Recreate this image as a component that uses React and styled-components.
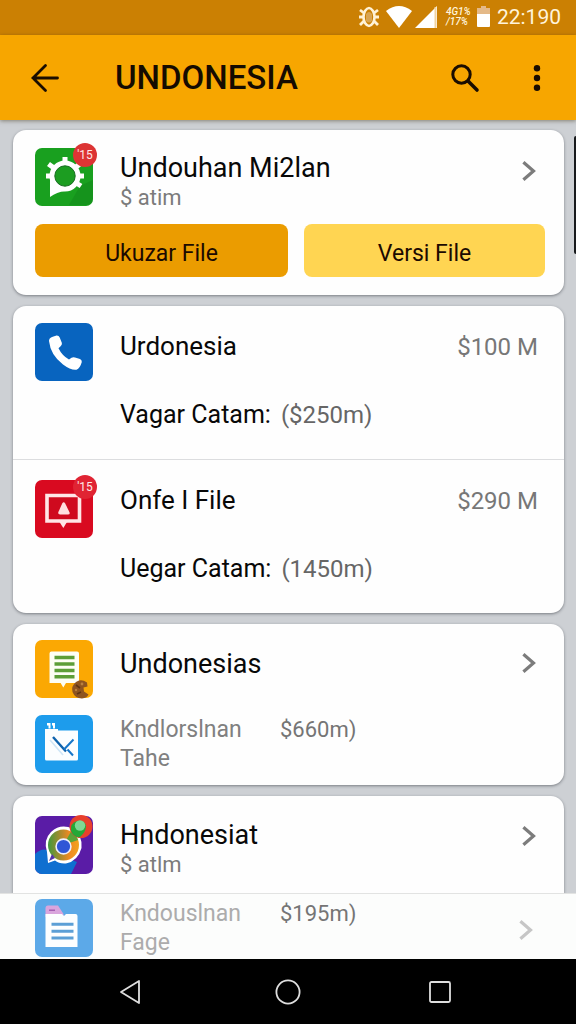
import React from "react";
import styled, { createGlobalStyle } from "styled-components";

const GlobalStyle = createGlobalStyle`
  *, *::before, *::after { box-sizing: border-box; }
  body {
    margin: 0;
    background: #cdd0d4;
    font-family: Roboto, "Liberation Sans", sans-serif;
    color: #080808;
  }
  h1, h2, h3, p { margin: 0; font-weight: 400; }
  button { font: inherit; color: inherit; border: 0; padding: 0; background: none; cursor: pointer; }
  svg { display: block; overflow: visible; }
`;

const Page = styled.div`
  position: relative;
  display: flex;
  flex-direction: column;
  min-height: 100vh;
`;

const StatusBar = styled.div`
  display: flex;
  align-items: center;
  justify-content: flex-end;
  gap: 7px;
  height: 35px;
  padding: 0 15px 2px 0;
  background: #cb8003;
  color: #fff4dc;
`;

const SignalGroup = styled.div`
  display: flex;
  gap: 3px;
`;

const NetStats = styled.div`
  width: 24px;
  margin-left: 2px;
  font-size: 10px;
  line-height: 10px;
  font-style: italic;
  font-weight: 500;
`;

const Clock = styled.time`
  font-size: 21px;
  line-height: 28px;
`;

const AppBar = styled.header`
  position: relative;
  display: flex;
  align-items: center;
  gap: 24px;
  height: 85px;
  padding: 0 15px 0 21px;
  background: #f7a600;
  box-shadow: 0 1px 4px rgba(60, 50, 20, 0.5);
`;

const IconButton = styled.button`
  display: grid;
  place-items: center;
  flex: none;
  width: 48px;
  height: 48px;
`;

const Title = styled.h1`
  flex: 1;
  padding-left: 22px;
  font-size: 33px;
  line-height: 40px;
  font-weight: 500;
  color: #150b00;
`;

const Main = styled.main`
  flex: 1;
  display: flex;
  flex-direction: column;
  gap: 11px;
  padding: 10px 12px 0 13px;
`;

const Card = styled.section`
  background: #fefefe;
  border-radius: ${(p) => (p.$cut ? "13px 13px 0 0" : "13px")};
  box-shadow: 0 1px 3px rgba(40, 44, 52, 0.5);
`;

const Row = styled.div`
  display: flex;
  align-items: flex-start;
  gap: 27px;
  padding: ${(p) => p.$top}px 18px ${(p) => p.$bottom || 0}px 22px;
`;

const Divided = styled.div`
  & + & { border-top: 1px solid #dcdddf; }
`;

const Tile = styled.div`
  position: relative;
  flex: none;
  width: 58px;
  height: 58px;
`;

const Badge = styled.span`
  position: absolute;
  top: -5px;
  right: -4px;
  width: 24px;
  height: 24px;
  border-radius: 50%;
  background: ${(p) => p.$color};
  color: #ffe9e9;
  font-size: 12px;
  line-height: 24px;
  text-align: center;
`;

const Body = styled.div`
  flex: 1;
  min-width: 0;
  padding-top: ${(p) => p.$inset || 0}px;
`;

const Heading = styled.h2`
  font-size: ${(p) => (p.$large ? 27 : 26)}px;
  line-height: 32px;
`;

const Subtitle = styled.p`
  font-size: 22px;
  line-height: 28px;
  color: #7b7b7b;
`;

const Line = styled.div`
  display: flex;
  justify-content: space-between;
  align-items: baseline;
`;

const Price = styled.span`
  padding-right: 8px;
  font-size: 24px;
  line-height: 32px;
  color: #777;
`;

const Detail = styled.p`
  display: flex;
  gap: 10px;
  padding: 38px 0 30px;
  font-size: 25px;
  line-height: 28px;
`;

const DetailAmount = styled.span`
  font-size: 24px;
  color: #666;
`;

const Entry = styled.div`
  flex: 1;
  display: grid;
  grid-template-columns: 160px 1fr;
`;

const EntryName = styled.p`
  max-width: 130px;
  font-size: 23px;
  line-height: 29px;
  color: ${(p) => (p.$faded ? "#acacac" : "#808080")};
`;

const EntryAmount = styled.p`
  font-size: 22px;
  line-height: 29px;
  color: #757575;
`;

const Actions = styled.div`
  display: grid;
  grid-template-columns: 21fr 20fr;
  gap: 16px;
  padding: 12px 19px 18px 22px;
`;

const Action = styled.button`
  height: 53px;
  border-radius: 8px;
  background: ${(p) => (p.$primary ? "#eb9c00" : "#ffd552")};
  color: #1c0a00;
  font-size: 23px;
  line-height: 28px;
  padding-top: 6px;
`;

const ChevronButton = styled.button`
  display: grid;
  place-items: center;
  flex: none;
  width: 34px;
  height: 32px;
  margin-top: ${(p) => p.$drop}px;
  color: ${(p) => (p.$faded ? "#c6c6c6" : "#7c7c7c")};
`;

const Sheet = styled.section`
  position: relative;
  border-top: 1px solid #e2e3e2;
  background: #fcfdfc;
  height: 66px;
  padding: 0 15px 0 13px;
`;

const NavBar = styled.nav`
  position: relative;
  display: grid;
  grid-template-columns: 32fr 31fr 30fr;
  place-items: center;
  height: 65px;
  padding: 0 61px 0 50px;
  background: #000;
  color: #dedede;
`;

const ScrollThumb = styled.div`
  position: absolute;
  top: 136px;
  right: 0;
  width: 2px;
  height: 118px;
  border-radius: 2px 0 0 2px;
  background: #17191c;
`;

const Chevron = () => (
  <svg width="14" height="20" viewBox="0 0 14 20" fill="none" stroke="currentColor" strokeWidth="3.2">
    <path d="M1.4 1.2 11.5 10 1.4 18.8" />
  </svg>
);

const Frame = ({ fill, children }) => (
  <svg width="58" height="58" viewBox="0 0 58 58" aria-hidden="true">
    <rect width="58" height="58" rx="7" fill={fill} />
    {children}
  </svg>
);

const GearIcon = () => (
  <Frame fill="#19a01f">
    <path d="M45 38 34 57H51Q58 57 58 50V32L45 38Z" fill="#118319" opacity=".45" />
    <path d="M15 49 15 31H30V43Q22 44 15 49Z" fill="#fff" />
    <g stroke="#fff" strokeWidth="5">
      <path d="M30 28V9M30 28 13.5 16M30 28H11M30 28H49M30 28 46 15M30 28 46 38" />
    </g>
    <circle cx="30" cy="28" r="15.5" fill="#fff" />
    <circle cx="30" cy="28" r="10.2" fill="#1c9d21" stroke="#176d20" strokeWidth="1" />
  </Frame>
);

const PhoneIcon = () => (
  <Frame fill="#0864bf">
    <path
      fill="#fff"
      d="M14 18Q14 15 17 14L21.5 12.5Q23.8 12.3 24.7 14.5L26.9 20Q27.2 22 25.6 23.2L23.5 25.2Q27 32.5 34 36.5L36.5 34.8Q38 34 40 34.5L45 36Q47 37 46.8 39Q45 45.5 41.5 46.7Q36 47.5 28 41.5Q15.5 32 14 18Z"
    />
  </Frame>
);

const AlertIcon = () => (
  <Frame fill="#d90a20">
    <path d="M12 15.5H44.5V41H12Z" fill="#cf0a1e" stroke="#ffe6e6" strokeWidth="3.6" />
    <path d="M24.5 42H32L28.3 48Z" fill="#ffe6e6" />
    <path d="M27.2 23.4Q28.8 21 30.2 23.6L34.6 32.4Q35.2 34.4 33 34.4H25Q22.6 34.2 23.4 32Z" fill="#ffdfdf" />
  </Frame>
);

const NotesIcon = () => (
  <Frame fill="#fba803">
    <path d="M16.5 11.5H42Q44 11.5 44 13.5V43H31L28.3 47.5 25.6 43H14.5V13.5Q14.5 11.5 16.5 11.5Z" fill="#fdfef4" />
    <path d="M19.5 17.6H39.5M19.5 24H39.5M19.5 30.5H39.5M19.5 36.8H39.5" stroke="#5d9e37" strokeWidth="3.5" />
    <path d="M52 42.5Q46 38.5 41 42Q36 46 37.5 52Q40 58.5 47 58.5Q52 58 53.5 54.5L49 51.5 48.5 47.5 52.5 46.5Z" fill="#8e5420" />
    <path d="M41 45 45 48M42 54 46 52" stroke="#5f3512" strokeWidth="1.6" />
    <circle cx="47" cy="44" r="1.4" fill="#b9803f" />
    <circle cx="41" cy="50" r="1.2" fill="#b9803f" />
  </Frame>
);

const MemoIcon = () => (
  <Frame fill="#1d9cec">
    <path d="M10 14H23V15.5H43V44Q43 45.5 41.5 45.5H11.5Q10 45.5 10 44Z" fill="#fcfeff" />
    <path d="M12 8H15.5V13.5H13.5V10.5H12ZM17 8H20V13.5H18V10.5H17Z" fill="#fff" />
    <path d="M18 22 31 36.5" stroke="#0d62ad" strokeWidth="2.4" />
    <path d="M29 34.5 38.5 24.5M32.5 34.5 38 40.5" stroke="#1877c9" strokeWidth="2" />
    <path d="M15 25 28 40" stroke="#cfe6f7" strokeWidth="1.6" />
  </Frame>
);

const ChatIcon = () => (
  <svg width="58" height="58" viewBox="0 0 58 58" aria-hidden="true">
    <defs>
      <linearGradient id="chatRing" x1="0" y1="0" x2="1" y2="0">
        <stop offset="0" stopColor="#3f9a3f" />
        <stop offset=".4" stopColor="#a98a2e" />
        <stop offset=".7" stopColor="#ef8a22" />
        <stop offset="1" stopColor="#f2a41f" />
      </linearGradient>
      <clipPath id="chatTile">
        <rect width="58" height="58" rx="7" />
      </clipPath>
    </defs>
    <g clipPath="url(#chatTile)">
      <rect width="58" height="58" fill="#5a1ca6" />
      <path d="M0 38Q8 30 16 36L42 46 36 58H0Z" fill="#0f6fd0" />
    </g>
    <path d="M13 47 12 36Q8 24 16 16Q26 7 38 13Q48 20 46.5 32Q43 45 31 47.5Q24 48 20 44.5Z" fill="#fff" />
    <circle cx="28.5" cy="29" r="15.5" fill="url(#chatRing)" />
    <path d="M28.5 29 36 15.4A15.5 15.5 0 0 1 43 24Z" fill="#5aa338" />
    <path d="M14 45 17 38 20 42Z" fill="#5534a8" />
    <circle cx="28.5" cy="30.5" r="7.4" fill="#2f56d6" stroke="#eef0ff" strokeWidth="1.6" />
    <circle cx="46" cy="10.5" r="11.5" fill="#e8402c" />
    <path d="M36 15Q35 7 42 5Q50 4 51 10Q51 16 45 21Q39 22 36 15Z" fill="#25a837" />
    <circle cx="45" cy="9.5" r="5.2" fill="#7ed795" />
  </svg>
);

const FolderIcon = () => (
  <Frame fill="#5ca9e8">
    <path d="M10.5 16V9Q10.5 6.5 13 6.5H23L28.5 15V18H10.5Z" fill="#d9a5dd" />
    <path d="M14 10.5H20V12H14Z" fill="#a65fb4" />
    <path d="M10.5 15H27L29 17 31 15H40.5Q42.5 15 42.5 17V48H10.5Z" fill="#fcfeff" />
    <path d="M16.5 25.3H38.5M16.5 32.3H38.5M16.5 39H38.5" stroke="#5b9fd6" strokeWidth="3" />
  </Frame>
);

const AlarmIcon = () => (
  <svg width="20" height="22" viewBox="0 0 20 22" fill="none" stroke="#fff2d6" aria-hidden="true">
    <path d="M1 4 5 7M19 4 15 7M0 11H4M20 11H16M1 19 5 15M19 19 15 15" strokeWidth="2.8" />
    <path d="M6 5Q10-1 14 5Q17 11 14 17Q10 23 6 17Q3 11 6 5Z" strokeWidth="2.6" />
    <path d="M7 8Q10 4 13 8V15Q10 18 7 15Z" fill="#d8a452" stroke="none" />
  </svg>
);

const WifiIcon = () => (
  <svg width="26" height="22" viewBox="0 0 26 22" fill="#fff" aria-hidden="true">
    <path d="M0 5Q13-5 26 5L13 22Z" />
  </svg>
);

const SignalIcon = () => (
  <svg width="22" height="22" viewBox="0 0 22 22" aria-hidden="true">
    <path d="M0 22 22 0V22Z" fill="#fff" />
    <path d="M20.5 1V22" stroke="#f0d3a0" strokeWidth="2" />
  </svg>
);

const Battery = () => (
  <svg width="13" height="21" viewBox="0 0 13 21" aria-hidden="true">
    <path d="M4 0H9V2H13V9H0V2H4Z" fill="#e4b988" />
    <path d="M0 8H13V20Q13 21 12 21H1Q0 21 0 20Z" fill="#fff" />
  </svg>
);

function AccountItem({ icon, badge, name, price, label, amount, top, inset }) {
  return (
    <Divided>
      <Row $top={top}>
        <Tile>
          {icon}
          {badge && <Badge $color="#e02433">{badge}</Badge>}
        </Tile>
        <Body $inset={inset}>
          <Line>
            <Heading>{name}</Heading>
            <Price>{price}</Price>
          </Line>
          <Detail>
            {label}
            <DetailAmount>{amount}</DetailAmount>
          </Detail>
        </Body>
      </Row>
    </Divided>
  );
}

export default function App() {
  return (
    <Page>
      <GlobalStyle />
      <StatusBar>
        <AlarmIcon />
        <SignalGroup>
          <WifiIcon />
          <SignalIcon />
        </SignalGroup>
        <NetStats>
          4G1%
          <br />
          /17%
        </NetStats>
        <Battery />
        <Clock>22:190</Clock>
      </StatusBar>

      <AppBar>
        <IconButton aria-label="Back">
          <svg width="28" height="28" viewBox="0 0 28 28" fill="none" stroke="#1a0d00" strokeWidth="2.8" strokeLinecap="round">
            <path d="M26.5 14H2M14.5 1.5 2 14 14.5 26.5" />
          </svg>
        </IconButton>
        <Title>UNDONESIA</Title>
        <IconButton aria-label="Search">
          <svg width="28" height="28" viewBox="0 0 28 28" fill="none" stroke="#1a0d00" strokeLinecap="round">
            <circle cx="10.5" cy="10.5" r="8.7" strokeWidth="3" />
            <path d="M17.5 17.5 26 26" strokeWidth="3.6" />
          </svg>
        </IconButton>
        <IconButton aria-label="More">
          <svg width="8" height="26" viewBox="0 0 8 26" fill="#1a0d00">
            <circle cx="4" cy="3.3" r="3.2" />
            <circle cx="4" cy="13" r="3.2" />
            <circle cx="4" cy="22.7" r="3.2" />
          </svg>
        </IconButton>
      </AppBar>

      <Main>
        <Card>
          <Row $top={18}>
            <Tile>
              <GearIcon />
              <Badge $color="#dc3434">'15</Badge>
            </Tile>
            <Body $inset={4}>
              <Heading $large>Undouhan Mi2lan</Heading>
              <Subtitle>$ atim</Subtitle>
            </Body>
            <ChevronButton $drop={7} aria-label="Open Undouhan Mi2lan">
              <Chevron />
            </ChevronButton>
          </Row>
          <Actions>
            <Action $primary>Ukuzar File</Action>
            <Action>Versi File</Action>
          </Actions>
        </Card>

        <Card>
          <AccountItem
            icon={<PhoneIcon />}
            name="Urdonesia"
            price="$100 M"
            label="Vagar Catam:"
            amount="($250m)"
            top={17}
            inset={7}
          />
          <AccountItem
            icon={<AlertIcon />}
            badge="'15"
            name="Onfe I File"
            price="$290 M"
            label="Uegar Catam:"
            amount="(1450m)"
            top={20}
            inset={4}
          />
        </Card>

        <Card>
          <Row $top={16}>
            <Tile>
              <NotesIcon />
            </Tile>
            <Body $inset={8}>
              <Heading $large>Undonesias</Heading>
            </Body>
            <ChevronButton $drop={7} aria-label="Open Undonesias">
              <Chevron />
            </ChevronButton>
          </Row>
          <Row $top={17} $bottom={12}>
            <Tile>
              <MemoIcon />
            </Tile>
            <Entry>
              <EntryName>Kndlorslnan Tahe</EntryName>
              <EntryAmount>$660m)</EntryAmount>
            </Entry>
          </Row>
        </Card>

        <Card $cut>
          <Row $top={20} $bottom={14}>
            <Tile>
              <ChatIcon />
            </Tile>
            <Body $inset={3}>
              <Heading $large>Hndonesiat</Heading>
              <Subtitle>$ atlm</Subtitle>
            </Body>
            <ChevronButton $drop={4} aria-label="Open Hndonesiat">
              <Chevron />
            </ChevronButton>
          </Row>
        </Card>
      </Main>

      <Sheet>
        <Row $top={5}>
          <Tile>
            <FolderIcon />
          </Tile>
          <Entry>
            <EntryName $faded>Kndouslnan Fage</EntryName>
            <EntryAmount>$195m)</EntryAmount>
          </Entry>
          <ChevronButton $faded $drop={15} aria-label="Open Kndouslnan Fage">
            <Chevron />
          </ChevronButton>
        </Row>
      </Sheet>

      <NavBar>
        <IconButton aria-label="Back">
          <svg width="20" height="24" viewBox="0 0 20 24" fill="none" stroke="currentColor" strokeWidth="1.8" strokeLinejoin="round">
            <path d="M19 1V23L1 12Z" />
          </svg>
        </IconButton>
        <IconButton aria-label="Home">
          <svg width="26" height="26" viewBox="0 0 26 26" fill="none" stroke="currentColor" strokeWidth="1.8">
            <circle cx="13" cy="13" r="11.6" />
          </svg>
        </IconButton>
        <IconButton aria-label="Recent apps">
          <svg width="22" height="22" viewBox="0 0 22 22" fill="none" stroke="currentColor" strokeWidth="1.8">
            <rect x="1" y="1" width="20" height="20" rx="1.5" />
          </svg>
        </IconButton>
      </NavBar>

      <ScrollThumb aria-hidden="true" />
    </Page>
  );
}
